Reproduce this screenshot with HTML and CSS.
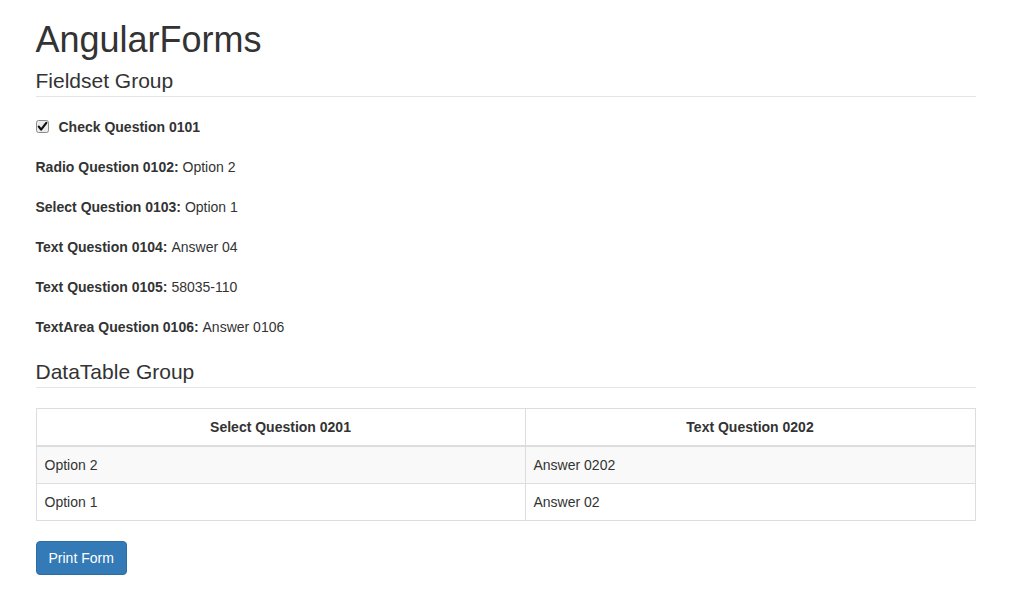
FILE: index.html
```html
<!DOCTYPE html>
<html>
<head>
<meta charset="utf-8">
<link rel="stylesheet" href="styles.css">
</head>
<body>
<div class="container">
  <h1 class="title">AngularForms</h1>
  <fieldset class="group">
    <legend class="legend">Fieldset Group</legend>
    <div class="field check">
      <span class="box"><svg width="13" height="13" viewBox="0 0 13 13"><rect x="0.5" y="0.5" width="12" height="12" rx="2" fill="#ececec" stroke="#8a8a8a"/><path d="M2.8 6.6 L5.1 9.6 L10.3 2.8" fill="none" stroke="#111" stroke-width="2.2" stroke-linejoin="round" stroke-linecap="round"/></svg></span>
      <b>Check Question 0101</b>
    </div>
    <div class="field"><b>Radio Question 0102:</b>&nbsp;Option 2</div>
    <div class="field"><b>Select Question 0103:</b>&nbsp;Option 1</div>
    <div class="field"><b>Text Question 0104:</b>&nbsp;Answer 04</div>
    <div class="field"><b>Text Question 0105:</b>&nbsp;58035-110</div>
    <div class="field"><b>TextArea Question 0106:</b>&nbsp;Answer 0106</div>
  </fieldset>
  <fieldset class="group">
    <legend class="legend">DataTable Group</legend>
    <table class="table">
      <thead>
        <tr><th class="col1">Select Question 0201</th><th>Text Question 0202</th></tr>
      </thead>
      <tbody>
        <tr class="odd"><td>Option 2</td><td>Answer 0202</td></tr>
        <tr><td>Option 1</td><td>Answer 02</td></tr>
      </tbody>
    </table>
  </fieldset>
  <button class="btn">Print Form</button>
</div>
</body>
</html>
```
FILE: styles.css
```css
* { box-sizing: border-box; }
html, body { margin: 0; padding: 0; }
body {
  font-family: "Liberation Sans", Arial, sans-serif;
  font-size: 14px;
  line-height: 1.42857143;
  color: #333;
  background: #fff;
}
.container {
  width: 970px;
  margin: 0 auto;
  padding: 0 15px;
}
.title {
  font-size: 36px;
  font-weight: 500;
  line-height: 1.1;
  margin: 20px 0 6px;
}
.group {
  border: 0;
  margin: 0;
  padding: 0;
  min-width: 0;
}
.legend {
  display: block;
  width: 100%;
  padding: 0;
  margin-bottom: 20px;
  font-size: 21px;
  line-height: inherit;
  color: #333;
  border: 0;
  border-bottom: 1px solid #e5e5e5;
}
.field {
  display: flex;
  align-items: center;
  height: 20px;
  margin-bottom: 20px;
}
.field b { font-weight: 700; }
.check .box {
  display: flex;
  width: 13px;
  height: 13px;
  margin-right: 10px;
}
.table {
  width: 100%;
  border-collapse: collapse;
  border-spacing: 0;
  border: 1px solid #ddd;
  margin-bottom: 20px;
}
.table th, .table td {
  border: 1px solid #ddd;
  padding: 8px;
  line-height: 1.42857143;
  text-align: left;
}
.table th {
  text-align: center;
  border-bottom-width: 2px;
  font-weight: 700;
}
.table .col1 { width: 489px; }
.table .odd { background: #f9f9f9; }
.btn {
  display: inline-block;
  font-family: inherit;
  font-size: 14px;
  line-height: 1.42857143;
  padding: 6px 12px;
  color: #fff;
  background: #337ab7;
  border: 1px solid #2e6da4;
  border-radius: 4px;
  cursor: pointer;
}
```
